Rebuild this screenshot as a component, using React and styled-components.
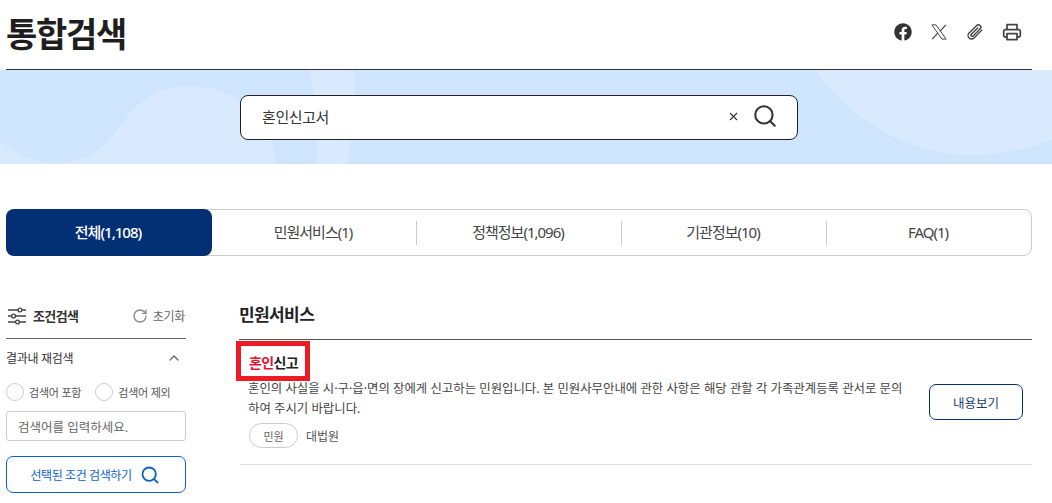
import React from "react";
import styled, { createGlobalStyle } from "styled-components";
import { FaFacebook } from "react-icons/fa";
import { Search, X, RotateCw, ChevronUp } from "lucide-react";

const Global = createGlobalStyle`
  html, body { margin: 0; padding: 0; background: #fff; }
  body { font-family: "Noto Sans", "Noto Sans CJK KR", sans-serif; color: #222; overflow: hidden; }
  * { box-sizing: border-box; }
`;

const Page = styled.div`width: 1052px; height: 503px; overflow: hidden;`;
const Header = styled.header`
  margin: 0 20px 0 6px; height: 70px; border-bottom: 1px solid #333;
  display: flex; justify-content: space-between; align-items: center;
`;
const Title = styled.h1`margin: 0 0 1px; font-size: 34px; font-weight: 700; letter-spacing: -1.3px; color: #1e1e1e; line-height: 1;`;
const Tools = styled.div`display: flex; align-items: center; gap: 18px; margin: 0 10px 6px 0; color: #333;`;
const ToolIcon = styled.svg`width: ${p => p.$size || 18}px; height: ${p => p.$size || 18}px; display: block;`;
const Banner = styled.section`
  position: relative; height: 94px; background: #cfe5fd; overflow: hidden;
  display: flex; justify-content: center; align-items: center;
`;
const BannerArt = styled.svg`position: absolute; inset: 0; width: 100%; height: 100%;`;
const SearchBox = styled.div`
  position: relative; width: 558px; height: 45px; margin-right: 14px; background: #fff; border: 1px solid #222; border-radius: 8px;
  display: flex; align-items: center; padding: 0 19px 2px 21px; font-size: 15px; color: #333; gap: 12px;
`;
const SearchText = styled.span`flex: 1; letter-spacing: -0.4px;`;
const Tabs = styled.nav`
  margin: 45px 20px 0 6px; height: 47px; border: 1px solid #ccc; border-radius: 8px; display: flex; align-items: center;
`;
const Tab = styled.div`
  flex: ${p => (p.$active ? "0 0 206px" : "1")}; height: ${p => (p.$active ? "47px" : "24px")};
  margin-left: ${p => (p.$active ? "-1px" : "0")};
  display: flex; align-items: center; justify-content: center; font-size: 15px; letter-spacing: -1px; padding: 0 2px 2px 0;
  font-weight: ${p => (p.$active ? 500 : 400)};
  color: ${p => (p.$active ? "#fff" : "#444")}; background: ${p => (p.$active ? "#033074" : "transparent")};
  border-radius: ${p => (p.$active ? "8px" : "0")};
  border-left: ${p => (p.$divider ? "1px solid #ccc" : "none")};
`;
const Body = styled.div`margin: 0 20px 0 6px; display: grid; grid-template-columns: 180px 1fr; column-gap: 54px;`;
const Side = styled.aside`padding-top: 47px;`;
const SideHead = styled.div`
  height: 36px; border-bottom: 1px solid #666; display: flex; align-items: center; padding: 0 1px 10px 2px;
`;
const SideTitle = styled.strong`font-size: 13px; font-weight: 700; margin-left: 7px; letter-spacing: -0.6px; color: #333;`;
const Reset = styled.span`margin-left: auto; display: flex; align-items: center; gap: 5px; font-size: 12px; color: #666; letter-spacing: -0.3px;`;
const Section = styled.div`display: flex; justify-content: space-between; align-items: center; font-size: 12px; height: 37px; color: #333; padding-right: 4px; letter-spacing: -0.3px;`;
const Radios = styled.div`display: flex; gap: 14px; margin-top: 7px;`;
const RadioLabel = styled.label`display: flex; align-items: center; gap: 5px; font-size: 11px; color: #555; letter-spacing: -0.2px;`;
const RadioDot = styled.span`width: 18px; height: 18px; border: 1px solid #ccc; border-radius: 50%; background: #fff;`;
const SideInput = styled.div`
  height: 30px; margin-top: 10px; border: 1px solid #ccc; border-radius: 3px; display: flex; align-items: center;
  padding-left: 11px; font-size: 12.5px; color: #666; letter-spacing: 0;
`;
const SideButton = styled.div`
  height: 37px; margin-top: 15px; border: 1px solid #0a62c9; border-radius: 7px; display: flex; align-items: center; justify-content: center;
  gap: 8px; font-size: 12px; color: #0a62c9; letter-spacing: -0.4px; padding-right: 2px;
`;
const Main = styled.main`padding-top: 46px;`;
const MainTitle = styled.h2`
  margin: 0 0 0 -1px; height: 38px; width: calc(100% + 1px); border-bottom: 1px solid #555; font-size: 17px; line-height: 25px; font-weight: 700; color: #222; letter-spacing: -0.6px;
`;
const Result = styled.article`
  display: flex; align-items: flex-start; gap: 24px; padding: 3px 9px 0 9px; border-bottom: 1px solid #e2e2e2; height: 125px;
`;
const ResultText = styled.div`flex: 1; min-width: 0;`;
const ResultHead = styled.div`position: relative; height: 36px; padding-top: 10px; font-size: 14px; font-weight: 700; letter-spacing: -0.6px; color: #222; line-height: 20px;`;
const Mark = styled.span`color: #e8112d;`;
const RedBox = styled.span`position: absolute; left: -13px; top: -2px; width: 74px; height: 40px; border: 5px solid #ed1c24; pointer-events: none;`;
const Desc = styled.p`margin: 0 0 0 -1px; font-size: 12.4px; line-height: 20px; color: #444; letter-spacing: 0;`;
const Meta = styled.div`display: flex; align-items: center; gap: 8px; margin-top: 4px; font-size: 12px; color: #555;`;
const Pill = styled.span`
  width: 49px; height: 25px; border: 1px solid #ccc; border-radius: 13px; display: flex; align-items: center; justify-content: center; font-size: 11px; color: #666;
`;
const ViewButton = styled.div`
  flex: none; width: 94px; height: 36px; border: 1px solid #033074; border-radius: 7px; display: flex; align-items: center; justify-content: center;
  font-size: 12.5px; color: #1c3b6e; margin-top: 41px;
`;

const XLogo = () => (
  <ToolIcon viewBox="0 0 24 24" fill="none" stroke="#444" strokeWidth="1.3">
    <path d="M2.5 2.5h5.5l13.5 19H16z" />
    <path d="M21 2.5l-7.6 8.6M10.6 13.2L3 21.5" strokeWidth="1.6" />
  </ToolIcon>
);
const Clip = () => (
  <ToolIcon viewBox="0 0 24 24" fill="none" stroke="#444" strokeWidth="1.9" strokeLinecap="round">
    <path d="M21 9.500L10.800 20a4.700 4.700 0 0 1-6.700-6.600L14.300 3.200a3.300 3.300 0 0 1 4.700 4.600L9.200 17.600a1.700 1.700 0 0 1-2.400-2.300L15.500 6.800" />
  </ToolIcon>
);
const PrinterIcon = () => (
  <ToolIcon $size={20} viewBox="0 0 24 24" fill="none" stroke="#444" strokeWidth="2.1" strokeLinejoin="round">
    <path d="M6 9V3.200h12V9" />
    <path d="M6 18H4.500A2.500 2.500 0 0 1 2 15.500V11.500A2.500 2.500 0 0 1 4.500 9h15a2.500 2.500 0 0 1 2.500 2.500v4a2.500 2.500 0 0 1-2.500 2.500H18" />
    <rect x="6" y="14" width="12" height="7" />
  </ToolIcon>
);
const Sliders = () => (
  <ToolIcon viewBox="0 0 18 18" fill="#fff" stroke="#444" strokeWidth="1.4">
    <path d="M0 3h18M0 9h18M0 15h18" />
    <circle cx="12" cy="3" r="1.900" />
    <circle cx="5.500" cy="9" r="1.900" />
    <circle cx="9.500" cy="15" r="1.900" />
  </ToolIcon>
);

export default function App() {
  return (
    <Page>
      <Global />
      <Header>
        <Title>통합검색</Title>
        <Tools>
          <FaFacebook size={18} />
          <XLogo />
          <Clip />
          <PrinterIcon />
        </Tools>
      </Header>
      <Banner>
        <BannerArt viewBox="0 0 1052 94" preserveAspectRatio="none">
          <path d="M0 71C15 84 35 93 55 93C95 93 110 70 125 50C140 28 165 16 190 16C230 16 262 40 272 72L276 94H0Z" fill="#d9eafe" />
          <path d="M310 0C316 30 318 60 316 94H347C352 60 356 30 354 0Z" fill="#d9eafe" />
          <path d="M815 0C850 50 910 85 968 85C1000 85 1030 78 1052 70V0Z" fill="#d9eafe" />
        </BannerArt>
        <SearchBox>
          <SearchText>혼인신고서</SearchText>
          <X size={13} strokeWidth={2} color="#333" />
          <Search size={26} strokeWidth={1.9} color="#333" />
        </SearchBox>
      </Banner>
      <Tabs>
        <Tab $active>전체(1,108)</Tab>
        <Tab>민원서비스(1)</Tab>
        <Tab $divider>정책정보(1,096)</Tab>
        <Tab $divider>기관정보(10)</Tab>
        <Tab $divider>FAQ(1)</Tab>
      </Tabs>
      <Body>
        <Side>
          <SideHead>
            <Sliders />
            <SideTitle>조건검색</SideTitle>
            <Reset><RotateCw size={16} strokeWidth={2} color="#888" />초기화</Reset>
          </SideHead>
          <Section>결과내 재검색<ChevronUp size={16} color="#666" /></Section>
          <Radios>
            <RadioLabel><RadioDot />검색어 포함</RadioLabel>
            <RadioLabel><RadioDot />검색어 제외</RadioLabel>
          </Radios>
          <SideInput>검색어를 입력하세요.</SideInput>
          <SideButton>선택된 조건 검색하기<Search size={20} strokeWidth={2.2} color="#0a62c9" /></SideButton>
        </Side>
        <Main>
          <MainTitle>민원서비스</MainTitle>
          <Result>
            <ResultText>
              <ResultHead>
                <Mark>혼인</Mark>신고
                <RedBox />
              </ResultHead>
              <Desc>혼인의 사실을 시·구·읍·면의 장에게 신고하는 민원입니다. 본 민원사무안내에 관한 사항은 해당 관할 각 가족관계등록 관서로 문의하여 주시기 바랍니다.</Desc>
              <Meta><Pill>민원</Pill>대법원</Meta>
            </ResultText>
            <ViewButton>내용보기</ViewButton>
          </Result>
        </Main>
      </Body>
    </Page>
  );
}
